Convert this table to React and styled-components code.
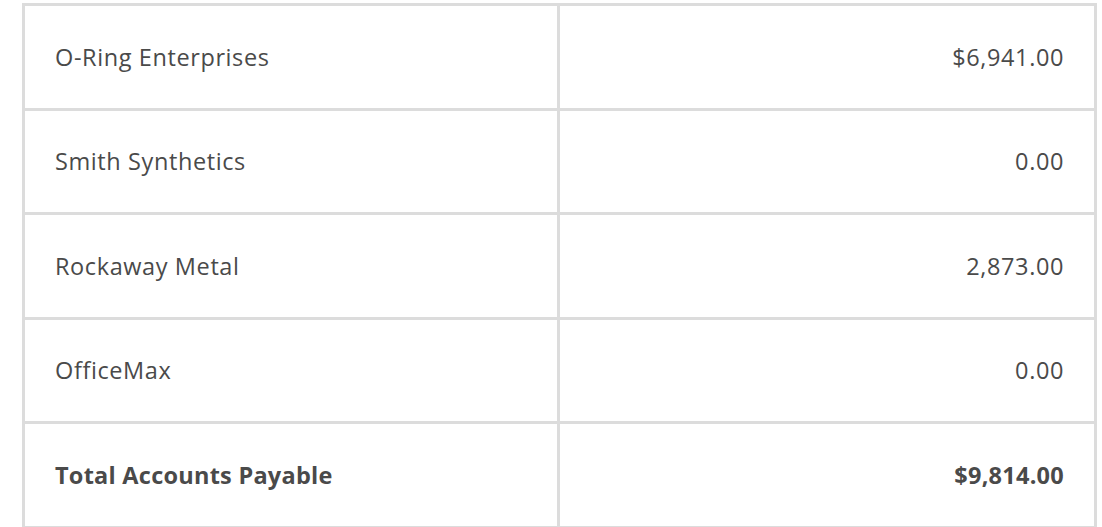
import React from "react";
import styled, { createGlobalStyle } from "styled-components";

const Global = createGlobalStyle`
  html, body { margin: 0; padding: 0; background: #ffffff; }
  body { font-family: "Open Sans", Lato, sans-serif; }
`;

const Page = styled.div`
  padding: 3px 5px 0 22px;
`;

const Table = styled.div`
  display: grid;
  grid-template-columns: 532px 1fr;
  grid-auto-rows: 101.5px;
  gap: 3px;
  padding: 3px;
  background: #dcdcdc;
  width: 1075px;
  box-sizing: border-box;
`;

const Cell = styled.div`
  background: #ffffff;
  display: flex;
  align-items: center;
  justify-content: ${(p) => (p.$right ? "flex-end" : "flex-start")};
  padding: 0 30px;
  font-size: 23.5px;
  color: #4a4a4a;
  font-weight: ${(p) => (p.$bold ? 700 : 400)};
  letter-spacing: ${(p) => (p.$bold ? "0.25px" : "0.6px")};
`;

const rows = [
  ["O-Ring Enterprises", "$6,941.00"],
  ["Smith Synthetics", "0.00"],
  ["Rockaway Metal", "2,873.00"],
  ["OfficeMax", "0.00"],
];

export default function App() {
  return (
    <>
      <Global />
      <Page>
        <Table>
          {rows.map(([name, amt]) => (
            <React.Fragment key={name}>
              <Cell>{name}</Cell>
              <Cell $right>{amt}</Cell>
            </React.Fragment>
          ))}
          <Cell $bold>Total Accounts Payable</Cell>
          <Cell $right $bold>$9,814.00</Cell>
        </Table>
      </Page>
    </>
  );
}
